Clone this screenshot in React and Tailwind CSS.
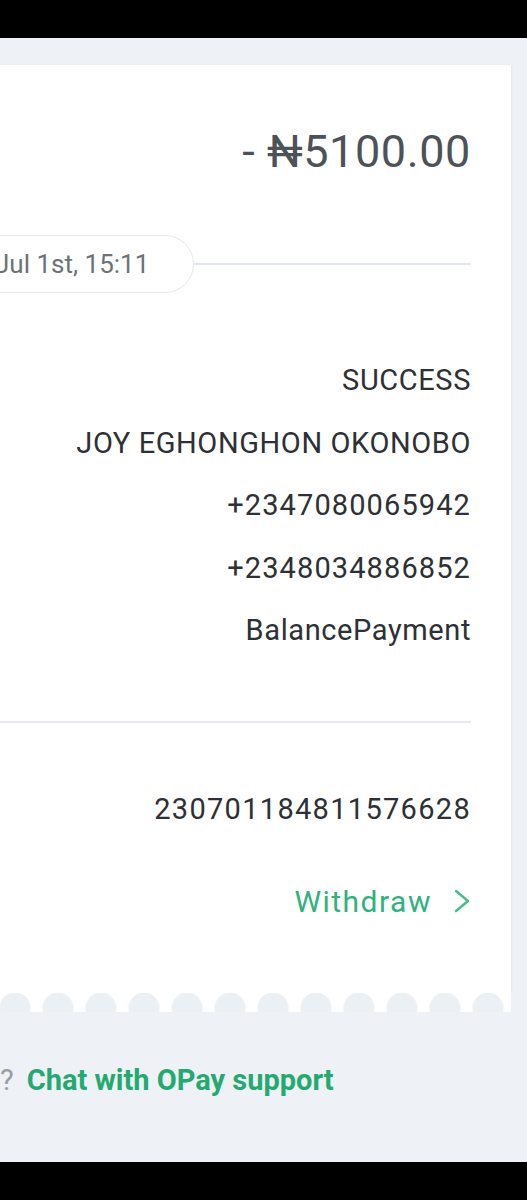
import React from "react";

const details = [
  { text: "SUCCESS", digits: false },
  { text: "JOY EGHONGHON OKONOBO", digits: false },
  { text: "+2347080065942", digits: true },
  { text: "+2348034886852", digits: true },
  { text: "BalancePayment", digits: false },
];

const App = () => {
  return (
    <div className="w-[527px] h-[1200px] flex flex-col bg-[#eef2f6] overflow-hidden font-['Roboto',sans-serif]">
      <div className="h-[38px] bg-black shrink-0" />

      <div className="pt-[27px]">
        <div className="w-[511px] bg-white shadow-[1px_0_2px_rgba(0,0,0,0.04)]">
          {/* amount */}
          <div className="pt-[63px] pr-[40px] text-right text-[45px] leading-[48px] tracking-[0.6px] text-[#4d5259]">
            - ₦5100.00
          </div>

          {/* date pill + line */}
          <div className="mt-[59px] flex items-center pr-[40px]">
            <div className="h-[58px] ml-[-40px] pl-[34px] pr-[44px] flex items-center border-[1.5px] border-[#e6e9ee] rounded-full text-[26px] text-[#6d7279]">
              Jul 1st, 15:11
            </div>
            <div className="flex-1 h-[2px] bg-[#e3e8ee]" />
          </div>

          {/* transaction details */}
          <div className="mt-[68px] pr-[40px] flex flex-col gap-[22.5px]">
            {details.map((item) => (
              <div
                key={item.text}
                className={
                  item.digits
                    ? "h-[40px] flex items-center justify-end text-[29px] tracking-[1.1px] text-[#2d3035]"
                    : "h-[40px] flex items-center justify-end text-[29px] tracking-[0.6px] text-[#2d3035]"
                }
              >
                {item.text}
              </div>
            ))}
          </div>

          <div className="mt-[70px] mr-[40px] h-[2px] bg-[#e6eaef]" />

          <div className="mt-[67px] pr-[40px] h-[40px] flex items-center justify-end text-[29px] tracking-[1.3px] text-[#2d3035]">
            230701184811576628
          </div>

          <div className="mt-[51px] pr-[39px] pb-[72px] h-[40px] box-content flex items-center justify-end gap-[20px] text-[30px] tracking-[1.5px] text-[#2fb27e]">
            <span>Withdraw</span>
            <svg width="20" height="26" viewBox="0 0 20 26" fill="none">
              <path
                d="M4 3 L16 13 L4 23"
                stroke="#47bb8c"
                strokeWidth="2.4"
                strokeLinecap="round"
                strokeLinejoin="round"
              />
            </svg>
          </div>
        </div>

        {/* scalloped edge */}
        <div className="w-[511px] h-[19px] bg-white bg-[radial-gradient(circle_at_50%_15px,#ebf0f5_15px,#ffffff_16px)] bg-[length:43px_19px] bg-[position:-6.5px_0] bg-repeat-x" />
      </div>

      <div className="mt-[49px] h-[40px] flex items-center text-[29px]">
        <span className="text-[#9a9ea4]">?</span>
        <span className="ml-[13px] font-bold text-[#25a971]">
          Chat with OPay support
        </span>
      </div>

      <div className="flex-1" />
      <div className="h-[38px] bg-black shrink-0" />
    </div>
  );
};

export default App;
